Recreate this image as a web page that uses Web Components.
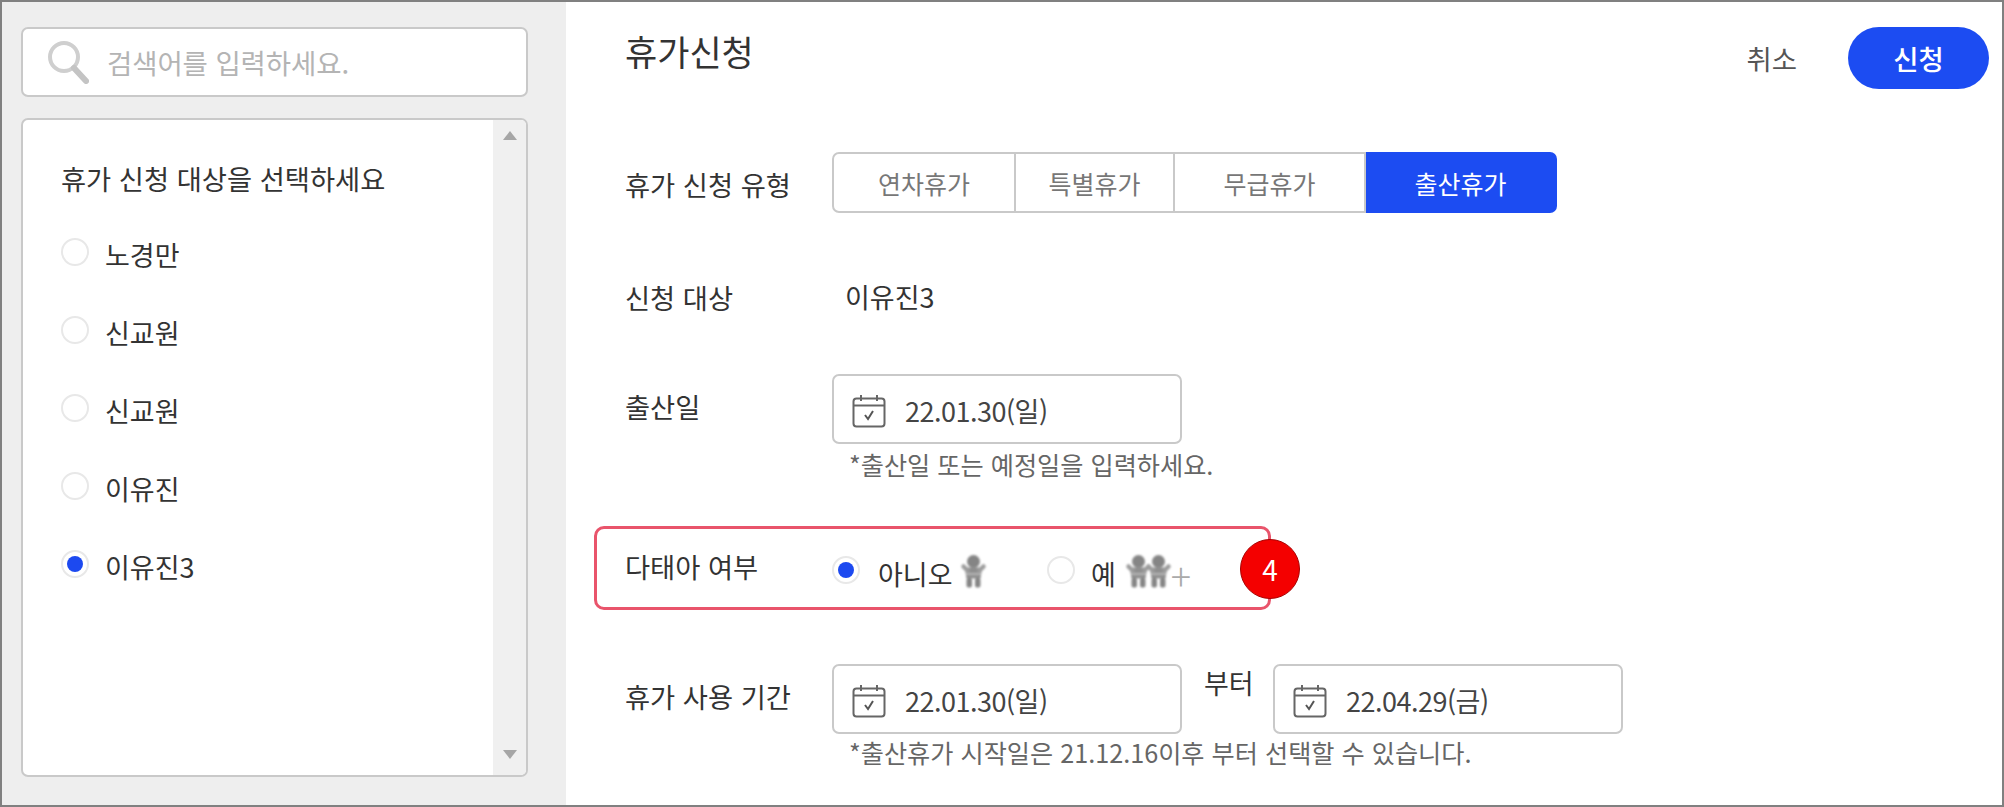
<!DOCTYPE html>
<html lang="ko">
<head>
<meta charset="utf-8">
<title>휴가신청</title>
<style>
html, body { margin: 0; padding: 0; background: #fff; }
body { font-family: "Noto Sans CJK KR", "Noto Sans", sans-serif; color: #333; }
</style>
</head>
<body>
<leave-app>
  <leave-sidebar slot="side">
    <search-box placeholder="검색어를 입력하세요."></search-box>
    <target-list heading="휴가 신청 대상을 선택하세요">
      <radio-item>노경만</radio-item>
      <radio-item>신교원</radio-item>
      <radio-item>신교원</radio-item>
      <radio-item>이유진</radio-item>
      <radio-item checked>이유진3</radio-item>
    </target-list>
  </leave-sidebar>

  <page-header heading="휴가신청"></page-header>

  <form-row label="휴가 신청 유형" style="--top:62px;--label-shift:2px">
    <seg-control active="3">
      <button>연차휴가</button><button>특별휴가</button><button>무급휴가</button><button>출산휴가</button>
    </seg-control>
  </form-row>

  <form-row label="신청 대상" style="--top:64px;--label-shift:-10px">
    <span style="font-size:27px;line-height:40px;padding-left:13px">이유진3</span>
  </form-row>

  <form-row label="출산일" style="--top:57px;--label-shift:2px">
    <div>
      <date-field value="22.01.30(일)"></date-field>
      <field-hint>*출산일 또는 예정일을 입력하세요.</field-hint>
    </div>
  </form-row>

  <twin-box></twin-box>

  <form-row label="휴가 사용 기간" style="--top:54px;--label-shift:2px">
    <div>
      <div style="display:flex;align-items:flex-start">
        <date-field value="22.01.30(일)"></date-field>
        <span style="font-size:27px;line-height:40px;width:91px;padding:0 0 0 22px;box-sizing:border-box;margin-top:-1px">부터</span>
        <date-field value="22.04.29(금)"></date-field>
      </div>
      <field-hint style="margin-top:-2px">*출산휴가 시작일은 21.12.16이후 부터 선택할 수 있습니다.</field-hint>
    </div>
  </form-row>
</leave-app>

<script>
class LeaveApp extends HTMLElement {
  constructor() {
    super();
    this.attachShadow({ mode: 'open' }).innerHTML = `
<style>
:host { display: block; width: 2004px; height: 807px; box-sizing: border-box; border: 2px solid #808080; overflow: hidden; }
.wrap { display: flex; height: 100%; }
.side { flex: 0 0 564px; }
.main { flex: 1; padding-left: 59px; min-width: 0; }
</style>
<div class="wrap">
  <div class="side"><slot name="side"></slot></div>
  <div class="main"><slot></slot></div>
</div>`;
  }
}
customElements.define('leave-app', LeaveApp);

class LeaveSidebar extends HTMLElement {
  constructor() {
    super();
    this.attachShadow({ mode: 'open' }).innerHTML = `
<style>
:host { display: flex; flex-direction: column; gap: 21px; height: 100%; box-sizing: border-box; background: #eeeeee; padding: 25px 38px 28px 19px; }
</style>
<slot></slot>`;
  }
}
customElements.define('leave-sidebar', LeaveSidebar);

class SearchBox extends HTMLElement {
  constructor() {
    super();
    this.attachShadow({ mode: 'open' }).innerHTML = `
<style>
:host { display: flex; align-items: center; height: 70px; box-sizing: border-box; background: #fff; border: 2px solid #c9c9c9; border-radius: 7px; padding-left: 24px; }
svg { flex: none; margin-right: 18px; }
span { font-size: 27.5px; color: #b4b4b4; letter-spacing: -.1px; }
</style>
<svg width="42" height="44" viewBox="0 0 42 44"><circle cx="17" cy="17" r="14" fill="none" stroke="#cfcfcf" stroke-width="4"/><path d="M27 28 39 41" stroke="#c4c4c4" stroke-width="6" stroke-linecap="round"/></svg>
<span>${this.getAttribute('placeholder')}</span>`;
  }
}
customElements.define('search-box', SearchBox);

class TargetList extends HTMLElement {
  constructor() {
    super();
    this.attachShadow({ mode: 'open' }).innerHTML = `
<style>
:host { display: flex; flex: 1; box-sizing: border-box; background: #fff; border: 2px solid #c9c9c9; border-radius: 7px; overflow: hidden; }
.body { flex: 1; padding: 38px 0 0 38px; }
h2 { margin: 0 0 36px; font-weight: 400; font-size: 27.3px; line-height: 40px; color: #333; }
.list { display: flex; flex-direction: column; gap: 38px; }
.bar { flex: 0 0 33px; background: #f0f0f0; display: flex; flex-direction: column; justify-content: space-between; align-items: center; padding: 11px 0 16px; box-sizing: border-box; }
i { width: 0; height: 0; border: 7px solid transparent; border-top: 0; border-bottom: 9px solid #a6a6a6; display: block; }
i.down { border-bottom: 0; border-top: 9px solid #a6a6a6; }
</style>
<div class="body">
  <h2>${this.getAttribute('heading')}</h2>
  <div class="list"><slot></slot></div>
</div>
<div class="bar"><i></i><i class="down"></i></div>`;
  }
}
customElements.define('target-list', TargetList);

class RadioItem extends HTMLElement {
  constructor() {
    super();
    const checked = this.hasAttribute('checked');
    this.attachShadow({ mode: 'open' }).innerHTML = `
<style>
:host { display: flex; align-items: center; height: 40px; font-size: 27px; color: #333; }
.dot { flex: none; width: 28px; height: 28px; box-sizing: border-box; border: 2px solid #e8e8e8; border-radius: 50%; margin-right: 16px; margin-top: -4px; display: flex; align-items: center; justify-content: center; }
.dot b { width: 16px; height: 16px; border-radius: 50%; background: #1c49f0; display: ${checked ? 'block' : 'none'}; }
</style>
<span class="dot"><b></b></span><slot></slot>`;
  }
}
customElements.define('radio-item', RadioItem);

class PageHeader extends HTMLElement {
  constructor() {
    super();
    this.attachShadow({ mode: 'open' }).innerHTML = `
<style>
:host { display: flex; justify-content: space-between; align-items: flex-start; height: 88px; padding-right: 13px; }
h1 { margin: 24px 0 0; font-weight: 400; font-size: 35px; line-height: 50px; color: #333; }
.acts { display: flex; align-items: center; gap: 51px; margin-top: 25px; }
.cancel { font-size: 27.5px; color: #555; }
.apply { display: flex; align-items: center; justify-content: center; width: 141px; height: 62px; border-radius: 31px; background: #1c4cf2; color: #fff; font-size: 27.5px; font-weight: 500; }
</style>
<h1>${this.getAttribute('heading')}</h1>
<div class="acts"><span class="cancel">취소</span><span class="apply">신청</span></div>`;
  }
}
customElements.define('page-header', PageHeader);

class FormRow extends HTMLElement {
  constructor() {
    super();
    this.attachShadow({ mode: 'open' }).innerHTML = `
<style>
:host { display: flex; align-items: flex-start; margin-top: var(--top, 0); }
.label { flex: 0 0 207px; font-size: 27.3px; line-height: 40px; color: #333; margin-top: calc(10px + var(--label-shift, 0px)); }
</style>
<div class="label">${this.getAttribute('label')}</div>
<div class="ctl"><slot></slot></div>`;
  }
}
customElements.define('form-row', FormRow);

class SegControl extends HTMLElement {
  connectedCallback() {
    if (this.shadowRoot) return;
    const active = Number(this.getAttribute('active'));
    const widths = [184, 159, 191, 191];
    const labels = [...this.querySelectorAll('button')].map(b => b.textContent);
    this.textContent = '';
    this.attachShadow({ mode: 'open' }).innerHTML = `
<style>
:host { display: flex; height: 61px; box-sizing: border-box; }
div { display: flex; align-items: center; justify-content: center; box-sizing: border-box; height: 100%; font-size: 25px; color: #777; background: #fff; border: 2px solid #c9c9c9; border-left-width: 0; }
div:first-of-type { border-left-width: 2px; border-radius: 7px 0 0 7px; }
div.on { background: #1c4cf2; border-color: #1c4cf2; color: #fff; border-radius: 0 7px 7px 0; }
</style>
${labels.map((t, i) => `<div class="${i === active ? 'on' : ''}" style="width:${widths[i]}px">${t}</div>`).join('')}`;
  }
}
customElements.define('seg-control', SegControl);

const CAL_ICON = `<svg width="34" height="34" viewBox="0 0 34 34"><rect x="1.5" y="4.5" width="31" height="28" rx="3" fill="none" stroke="#666" stroke-width="2"/><path d="M2 11.5H32" stroke="#666" stroke-width="2"/><path d="M9 1v6M25 1v6" stroke="#666" stroke-width="2"/><path d="M13 21l3 4 5-8" fill="none" stroke="#555" stroke-width="2"/></svg>`;

class DateField extends HTMLElement {
  constructor() {
    super();
    this.attachShadow({ mode: 'open' }).innerHTML = `
<style>
:host { display: flex; align-items: center; width: 350px; height: 70px; box-sizing: border-box; background: #fff; border: 2px solid #c9c9c9; border-radius: 7px; padding: 3px 0 0 18px; font-size: 27px; color: #444; }
svg { flex: none; margin-right: 19px; }
span { letter-spacing: -.5px; }
</style>
${CAL_ICON}<span>${this.getAttribute('value')}</span>`;
  }
}
customElements.define('date-field', DateField);

class FieldHint extends HTMLElement {
  constructor() {
    super();
    this.attachShadow({ mode: 'open' }).innerHTML = `
<style>
:host { display: block; font-size: 25.2px; line-height: 36px; color: #666; padding: 2px 0 0 17px; }
</style>
<slot></slot>`;
  }
}
customElements.define('field-hint', FieldHint);

// one baby: round head, short raised arms, thick striped body, two short legs
const BABY = x => `<g transform="translate(${x} 0)">
  <circle cx="11.5" cy="6.5" r="6.5" fill="#858585"/>
  <path d="M4.5 12.5h14l1 5-1 6h-14l-1-6z" fill="#8e8e8e"/>
  <path d="M5.5 15.5 1.5 11.5M17.5 15.5 21.5 11.5" stroke="#9c9c9c" stroke-width="4.5" stroke-linecap="round" fill="none"/>
  <path d="M4 19h15" stroke="#b4b4b4" stroke-width="2.2"/>
  <rect x="4.5" y="23" width="5.5" height="9.5" rx="2" fill="#858585"/><rect x="13" y="23" width="5.5" height="9.5" rx="2" fill="#858585"/>
</g>`;

class BabyIcon extends HTMLElement {
  constructor() {
    super();
    const n = Number(this.getAttribute('count') || 1);
    const w = n === 1 ? 23 : 43;
    this.attachShadow({ mode: 'open' }).innerHTML = `
<style>:host { display: inline-flex; } svg { filter: blur(.8px); overflow: visible; }</style>
<svg width="${w}" height="34" viewBox="0 0 ${w} 34">${BABY(0)}${n > 1 ? BABY(20) : ''}</svg>`;
  }
}
customElements.define('baby-icon', BabyIcon);

class TwinBox extends HTMLElement {
  constructor() {
    super();
    this.attachShadow({ mode: 'open' }).innerHTML = `
<style>
:host { display: flex; align-items: center; position: relative; width: 677px; height: 84px; box-sizing: border-box; margin: 44px 0 0 -31px; padding-left: 28px; border: 3px solid #e9546b; border-radius: 10px; }
.label { flex: 0 0 207px; font-size: 27.3px; color: #333; margin-top: -4px; }
.opt { display: flex; align-items: center; font-size: 27px; color: #333; margin-top: 10px; }
.radio { width: 28px; height: 28px; box-sizing: border-box; border: 2px solid #e8e8e8; border-radius: 50%; display: flex; align-items: center; justify-content: center; margin-top: -6px; }
.radio b { width: 16px; height: 16px; background: #1c49f0; border-radius: 50%; }
.plus { font-size: 38px; font-weight: 300; color: #aaa; line-height: 1; margin-left: 1px; margin-top: 3px; }
.badge { position: absolute; left: 643px; top: 10px; width: 60px; height: 60px; box-sizing: border-box; border-radius: 50%; background: #f40000; border: 1px solid #a80000; color: #fff; font-size: 28px; font-weight: 400; display: flex; align-items: center; justify-content: center; }
</style>
<div class="label">다태아 여부</div>
<div class="opt" style="width:215px"><span class="radio"><b></b></span><span style="margin-left:18px">아니오</span><baby-icon style="margin-left:9px;margin-top:-2px"></baby-icon></div>
<div class="opt"><span class="radio"></span><span style="margin-left:16px">예</span><baby-icon count="2" style="margin-left:11px;margin-top:-2px"></baby-icon><span class="plus">+</span></div>
<div class="badge">4</div>`;
  }
}
customElements.define('twin-box', TwinBox);
</script>
</body>
</html>
